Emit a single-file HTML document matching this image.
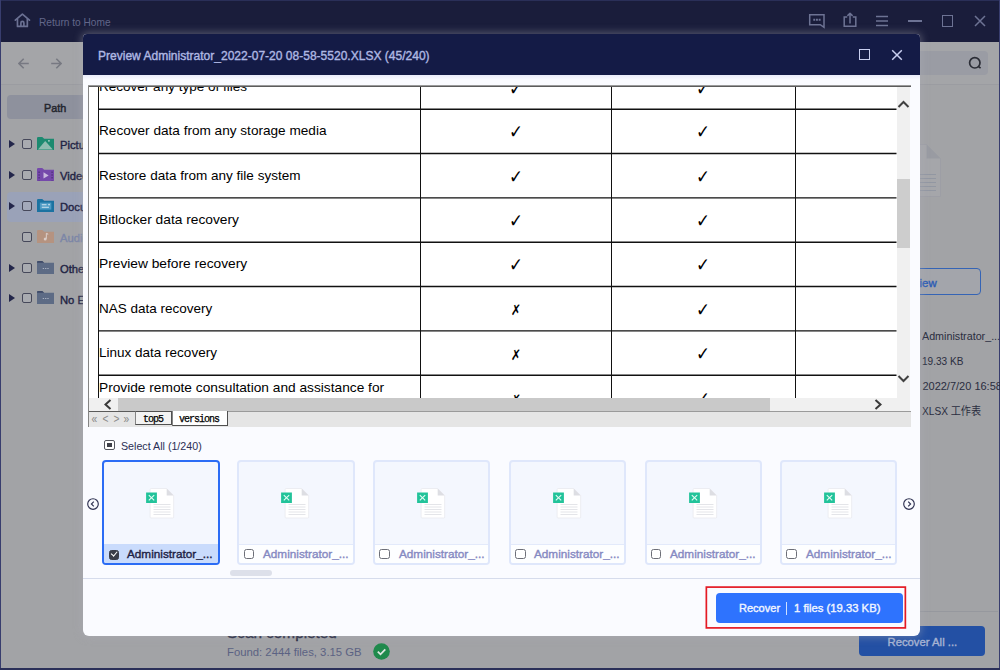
<!DOCTYPE html>
<html lang="en">
<head>
<meta charset="utf-8">
<title>Preview</title>
<style>
*{box-sizing:border-box;margin:0;padding:0}
html,body{width:1000px;height:670px;overflow:hidden;background:#1b1f3f}
body{font-family:"Liberation Sans","Noto Sans CJK SC",sans-serif;position:relative;color:#1f2340}
.abs{position:absolute}
.t{position:absolute;white-space:nowrap;line-height:1;transform-origin:0 50%}
/* ---------- main (dimmed) window ---------- */
#win{position:absolute;left:0;top:0;width:1000px;height:670px;background:#a2a3a6;overflow:hidden}
#frameL{left:0;top:0;width:1.4px;height:670px;background:#383d6e}
#frameR{left:998.6px;top:0;width:1.4px;height:670px;background:#383d6e}
#frameB{left:0;top:668px;width:1000px;height:2px;background:#2b3059}
#tbar{left:0;top:0;width:1000px;height:42px;background:#1a1d3b;border-top:1px solid #2a2f58}
#toolbar{left:1px;top:42px;width:998px;height:42.5px;background:#a4a5a8;border-bottom:1px solid #9b9ca1}
#pathbtn{left:7px;top:95.4px;width:100px;height:23.2px;border-radius:4px;background:#8e919d}
#selrow{left:7px;top:192px;width:100px;height:30px;border-radius:4px;background:#9aa2b8}
.tri{position:absolute;width:0;height:0;border-left:6px solid #23264a;border-top:4px solid transparent;border-bottom:4px solid transparent}
.cb{position:absolute;width:10px;height:10px;border:1px solid #46485a;border-radius:2px;background:#a9abb0}
.tl{font-size:11px;font-weight:bold;color:#1f2344;left:60.4px;transform:scaleX(1.02)}
#search{left:905px;top:51px;width:83px;height:24px;border-radius:4px;background:#9a9ca4}
#footline{left:200px;top:611.4px;width:798px;height:1px;background:#96989e}
#recall{left:859.3px;top:626.3px;width:125.7px;height:30px;border-radius:4px;background:#2350a4}
#pvbtn{left:880px;top:268px;width:101px;height:27px;border-radius:4px;border:1px solid #3564b5;background:#a3a5ab}
.rp{font-size:11px;color:#2a2d40;left:922.4px;transform:scaleX(.918)}
/* ---------- dialog ---------- */
#dlg{position:absolute;left:83px;top:34px;width:837px;height:601.6px;background:#fafbff;border-radius:4px 4px 6px 6px;box-shadow:0 0 9px 1px rgba(172,174,184,.45);overflow:hidden}
#dtitle{left:0;top:0;width:837px;height:40.5px;background:#141b46}
#dgrad{left:0;top:40.5px;width:837px;height:5px;background:linear-gradient(#e9ecfa,#fafbff)}

#sheet{left:5px;top:51px;width:823px;height:342px;overflow:hidden}
.hl{position:absolute;left:10px;width:798.5px;height:1.3px;background:#1c1c1c}
.vl{position:absolute;top:2px;width:1px;height:311px;background:#111}
.rt{left:11px;font-size:13px;color:#000}
.ck{font-family:"DejaVu Sans",sans-serif;font-size:18.5px;color:#000;width:20px;text-align:center;margin-left:-4px;transform-origin:50% 50%;transform:scaleX(.9)}
.ck.x{font-size:14.5px;transform:scaleX(.86)}
.nav{font-size:12px;color:#8b8b8b}
.nav span{display:inline-block;width:10.9px;text-align:center;transform:scaleX(.85)}
.tab{border:1px solid #505050;border-left-color:#858585;font-family:"Liberation Mono",monospace;font-size:10px;letter-spacing:-1px;color:#000;text-align:center;line-height:13.5px;-webkit-text-stroke:.25px #000}
.tab span{position:relative;left:-.5px}
.th{position:absolute;top:426px;width:117.3px;height:105px;border:2px solid #dfe7fb;border-radius:4px;background:#f4f7fe;overflow:hidden}
.th.sel{border-color:#2b6cf5;width:118px}
.lab{position:absolute;left:0;top:82px;width:114px;height:19px;background:#fdfeff;border-top:1px solid #e3eafb}
.sel .lab{background:#c9dbfc;border-top-color:#c9dbfc}
.c{position:absolute;left:4.3px;top:3.5px;width:10.5px;height:10.5px;border:1.5px solid #6d6f78;border-radius:2.5px;background:#fff}
.nm{left:23.7px;top:4.3px;font-size:11.8px;font-weight:bold;color:#8689c2;transform:scaleX(.996)}
.sel .nm{color:#1d2145}
.sel .c{background:#3b3e4a;border-color:#3b3e4a;left:5.5px;top:4.5px;width:10px;height:10px}
.sel .c::after{content:"";position:absolute;left:2px;top:-.5px;width:3px;height:5.4px;border:solid #fff;border-width:0 1.5px 1.5px 0;transform:rotate(40deg)}
.sb{font-weight:normal!important;-webkit-text-stroke:.38px currentColor}
/*FIT*/
#rth{font-size:11px!important;left:39.20px!important;transform:scaleX(0.9220)}
#dt{font-size:12.3px!important;left:14.90px!important;transform:scaleX(0.9780)}
#r0{font-size:13.3px!important;left:11.40px!important;transform:scaleX(1.0171)}
#r1{font-size:13.3px!important;left:11.40px!important;transform:scaleX(1.0226)}
#r2{font-size:13.3px!important;left:11.40px!important;transform:scaleX(1.0174)}
#r3{font-size:13.3px!important;left:11.40px!important;transform:scaleX(1.0351)}
#r4{font-size:13.3px!important;left:11.40px!important;transform:scaleX(1.0337)}
#r5{font-size:13.3px!important;left:11.40px!important;transform:scaleX(1.0143)}
#r6{font-size:13.3px!important;left:11.40px!important;transform:scaleX(1.0160)}
#r7{font-size:13.3px!important;left:11.40px!important;transform:scaleX(1.0313)}
#sa{font-size:11px!important;left:38.30px!important;transform:scaleX(0.9705)}
#pth{font-size:11.8px!important;left:43.75px!important;transform:scaleX(0.9163)}
#scn{font-size:14.5px!important;left:226.50px!important;transform:scaleX(1.0569)}
#fnd{font-size:11.2px!important;left:226.70px!important;transform:scaleX(1.0113)}
#rall{font-size:11.3px!important;left:887.50px!important;transform:scaleX(1.0000)}
#rp2{font-size:11px!important;left:922.40px!important;transform:scaleX(0.9146)}
#rp4{font-size:11px!important;left:922.40px!important;transform:scaleX(0.9207)}
#rc1{font-size:11.8px!important;left:655.50px!important;transform:scaleX(0.9354)}
#rc2{font-size:11.8px!important;left:711.00px!important;transform:scaleX(0.9547)}
/*ENDFIT*/</style>
</head>
<body>
<div id="win">
  <div class="abs" id="tbar"></div>
  <div class="abs" id="toolbar"></div>
  <div class="abs" id="frameL"></div><div class="abs" id="frameR"></div><div class="abs" id="frameB"></div>

  <!-- title bar -->
  <svg class="abs" style="left:14.3px;top:13px" width="16.8" height="15" viewBox="0 0 18 17" fill="none" stroke="#6b7193" stroke-width="1.9" stroke-linejoin="round" stroke-linecap="round"><path d="M1 8.2 L9 1.2 L17 8.2"/><path d="M3.4 7 V15.2 H14.6 V7"/><path d="M7.3 15 V11.2 a1.7 1.7 0 0 1 3.4 0 V15"/></svg>
  <div class="t" style="left:39px;top:16.5px;font-size:12px;color:#62678a" id="rth">Return to Home</div>

  <svg class="abs" style="left:808px;top:13px" width="18" height="16" viewBox="0 0 18 16" fill="none" stroke="#6d7394" stroke-width="1.5"><path d="M1.7 1.7 H16 V14.3 L12.3 11.7 H1.7 Z" stroke-linejoin="miter"/><path d="M5.3 6.7h1.9M8 6.7h1.9M10.7 6.7h1.9" stroke-width="1.9"/></svg>
  <svg class="abs" style="left:842.5px;top:12px" width="14" height="16" viewBox="0 0 14 16" fill="none" stroke="#6d7394" stroke-width="1.5"><path d="M4.2 5H1.2V14.2H12.8V5H9.8"/><path d="M7 11.5V1.5M4.4 3.9L7 1.3l2.6 2.6" stroke-linejoin="round"/></svg>
  <svg class="abs" style="left:876px;top:15px" width="12" height="12" viewBox="0 0 13 12" preserveAspectRatio="none" stroke="#6d7394" stroke-width="1.6"><path d="M0 1.5h13M0 6h13M0 10.5h13"/></svg>
  <div class="abs" style="left:908px;top:20px;width:14px;height:2px;background:#6d7394"></div>
  <div class="abs" style="left:941.7px;top:15.2px;width:11.5px;height:11.5px;border:1.5px solid #6d7394"></div>
  <svg class="abs" style="left:974px;top:15px" width="12" height="12" viewBox="0 0 12 12" stroke="#6d7394" stroke-width="1.5"><path d="M1 1L11 11M11 1L1 11"/></svg>

  <!-- toolbar -->
  <svg class="abs" style="left:18px;top:58px" width="11" height="11" viewBox="0 0 11 11" fill="none" stroke="#777982" stroke-width="1.6"><path d="M10.800 5.500H1.200M5.700.700L.900 5.500l4.800 4.800"/></svg>
  <svg class="abs" style="left:50.5px;top:58px" width="11" height="11" viewBox="0 0 11 11" fill="none" stroke="#777982" stroke-width="1.6"><path d="M.2 5.5h9.600M5.300.7l4.800 4.800-4.800 4.800"/></svg>
  <div class="abs" id="search"></div>
  <svg class="abs" style="left:967px;top:55px" width="16" height="16" viewBox="0 0 16 16" fill="none" stroke="#2b2d36" stroke-width="1.7"><circle cx="7.8" cy="7.8" r="5.2"/><path d="M11.6 11.6l2 1.6"/></svg>

  <!-- sidebar -->
  <div class="abs" id="pathbtn"></div>
  <div class="t sb" id="pth" style="left:44px;top:102.5px;font-size:12px;font-weight:bold;color:#25262f;-webkit-text-stroke-width:.5px">Path</div>
  <div class="abs" id="selrow"></div>

  <div class="tri" style="left:9px;top:140px"></div><div class="cb" style="left:22px;top:139px"></div>
  <div class="tri" style="left:9px;top:171px"></div><div class="cb" style="left:22px;top:170px"></div>
  <div class="tri" style="left:9px;top:202px"></div><div class="cb" style="left:22px;top:201px;background:#a3a9ba"></div>
  <div class="cb" style="left:22px;top:232px"></div>
  <div class="tri" style="left:9px;top:264px"></div><div class="cb" style="left:22px;top:263px"></div>
  <div class="tri" style="left:9px;top:294px"></div><div class="cb" style="left:22px;top:293px"></div>

  <!-- folder icons -->
  <svg class="abs" style="left:37.3px;top:137px" width="17.2" height="13" viewBox="0 0 18 13" preserveAspectRatio="none"><path d="M0 1.2 Q0 0 1.2 0 H5.5 L7.5 1.8 H18 V13 H0Z" fill="#1c8a70"/><path d="M1 12.4 L8.6 4 L16.6 12.4Z" fill="#8fbcb0"/><circle cx="12.5" cy="3.8" r=".9" fill="#b9d6ce"/></svg>
  <svg class="abs" style="left:37.3px;top:168px" width="17.2" height="13" viewBox="0 0 18 13" preserveAspectRatio="none"><path d="M0 1.2 Q0 0 1.2 0 H5.5 L7.5 1.8 H18 V13 H0Z" fill="#7549ab"/><path d="M6.8 4.2 L12.2 7.4 L6.8 10.6Z" fill="#c9b8de"/><path d="M2.2 3.5v9M15.8 3.5v9" stroke="#50307d" stroke-width="1.4" stroke-dasharray="1.4 1.4"/></svg>
  <svg class="abs" style="left:37.3px;top:199px" width="17.2" height="13" viewBox="0 0 18 13" preserveAspectRatio="none"><path d="M0 1.2 Q0 0 1.2 0 H5.5 L7.5 1.8 H18 V13 H0Z" fill="#1b72a1"/><rect x="3" y="3.6" width="12" height="7" fill="#4d9ac4"/><path d="M5 5.8h5M5 8.2h7.5" stroke="#d5e6f0" stroke-width="1.1"/><circle cx="12.6" cy="5.6" r=".9" fill="#d5e6f0"/></svg>
  <svg class="abs" style="left:37.3px;top:230px" width="17.2" height="13" viewBox="0 0 18 13" preserveAspectRatio="none"><path d="M0 1.2 Q0 0 1.2 0 H5.5 L7.5 1.8 H18 V13 H0Z" fill="#b59380"/><path d="M9.8 3.2v5.6" stroke="#d9cdc8" stroke-width="1.1"/><circle cx="8.6" cy="9" r="1.5" fill="#d9cdc8"/><path d="M9.8 3.2l2 1.2" stroke="#d9cdc8" stroke-width="1.1"/></svg>
  <svg class="abs" style="left:37.3px;top:261px" width="17.2" height="13" viewBox="0 0 18 13" preserveAspectRatio="none"><path d="M0 1.2 Q0 0 1.2 0 H5.5 L7.5 1.8 H18 V13 H0Z" fill="#5d6b85"/><path d="M0 1.2 Q0 0 1.2 0 H5.5 L7.5 1.8 H0Z" fill="#3e4a68"/><path d="M6 7.5h1.4M8.4 7.5h1.4M10.8 7.5h1.4" stroke="#a9b1c1" stroke-width="1.2"/></svg>
  <svg class="abs" style="left:37.3px;top:291px" width="17.2" height="13" viewBox="0 0 18 13" preserveAspectRatio="none"><path d="M0 1.2 Q0 0 1.2 0 H5.5 L7.5 1.8 H18 V13 H0Z" fill="#5d6b85"/><path d="M0 1.2 Q0 0 1.2 0 H5.5 L7.5 1.8 H0Z" fill="#3e4a68"/><path d="M6 7.5h1.4M8.4 7.5h1.4M10.8 7.5h1.4" stroke="#a9b1c1" stroke-width="1.2"/></svg>

  <div class="t tl sb" style="top:140px">Pictures</div>
  <div class="t tl sb" style="top:171px">Videos</div>
  <div class="t tl sb" style="top:202px">Documents</div>
  <div class="t tl sb" style="top:233px;color:#7c86a6">Audio</div>
  <div class="t tl sb" style="top:263.7px">Others</div>
  <div class="t tl sb" style="top:294.5px">No Extension</div>

  <!-- right panel -->
  <svg class="abs" style="left:905px;top:144px" width="37" height="56" viewBox="0 0 37 56"><path d="M0 .5H21.500L35.500 14.500V52.500H0Z" fill="#a5a6aa" stroke="#9d9ea5" stroke-width="1"/><path d="M21.500 .5L35.500 14.500H21.500Z" fill="#999ba2"/><path d="M4 30.500h27M4 34.500h27M4 38.500h27M4 42.500h27M4 46.500h27" stroke="#9297a2" stroke-width="1"/></svg>
  <div class="abs" id="pvbtn"></div>
  <div class="t sb" style="left:896px;top:277.5px;font-size:11.8px;font-weight:bold;color:#2c5cb5;transform:scaleX(.97)">Preview</div>
  <div class="t rp" id="rp1" style="top:330.5px;transform:scaleX(.975)">Administrator_...</div>
  <div class="t rp" id="rp2" style="top:355.5px">19.33 KB</div>
  <div class="t rp" id="rp3" style="top:380.5px;transform:scaleX(1)">2022/7/20 16:58</div>
  <div class="t rp" id="rp4" style="top:405.5px">XLSX 工作表</div>

  <!-- footer -->
  <div class="abs" id="footline"></div>
  <div class="t sb" id="scn" style="left:227px;top:625.7px;font-size:15px;font-weight:bold;color:#1c1f3a">Scan completed</div>
  <div class="t" id="fnd" style="left:227px;top:646.5px;font-size:12.5px;color:#5b6283">Found: 2444 files, 3.15 GB</div>
  <svg class="abs" style="left:373px;top:643.4px" width="17" height="17" viewBox="0 0 17 17"><circle cx="8.5" cy="8.5" r="8.3" fill="#1f8a4c"/><path d="M4.8 8.6l2.7 2.7 4.8-5" fill="none" stroke="#dfe7e2" stroke-width="1.8"/></svg>
  <div class="abs" id="recall"></div>
  <div class="t sb" id="rall" style="left:887px;top:636.5px;font-size:12.5px;color:#a6b3d3">Recover All ...</div>
</div>

<!-- ================= dialog ================= -->
<div id="dlg">
  <div class="abs" id="dtitle"></div>
  <div class="abs" id="dgrad"></div>
  <div class="t sb" id="dt" style="left:15px;top:15.5px;font-size:12px;font-weight:bold;color:#afb8e3">Preview Administrator_2022-07-20 08-58-5520.XLSX (45/240)</div>
  <div class="abs" style="left:776px;top:15px;width:11px;height:11px;border:1.5px solid #c9cff0"></div>
  <svg class="abs" style="left:808px;top:15px" width="12" height="12" viewBox="0 0 12 12" stroke="#c9cff0" stroke-width="1.5"><path d="M1.2 1.2L10.8 10.8M10.8 1.2L1.2 10.8"/></svg>
  <div class="abs" id="sheet">
   <div class="abs" style="left:1px;top:2px;width:808px;height:311px;background:#fff"></div>
   <svg class="abs" style="left:0;top:0" width="809" height="313" viewBox="0 0 809 313"><path d="M10 24.20H808.5M10 68.53H808.5M10 112.87H808.5M10 157.20H808.5M10 201.53H808.5M10 245.87H808.5M10 290.20H808.5" stroke="#111" stroke-width="1.45" fill="none"/></svg>
   <div class="vl" style="left:10px"></div>
   <div class="vl" style="left:332px"></div>
   <div class="vl" style="left:523px"></div>
   <div class="vl" style="left:707px"></div>
   <div class="t rt" id="r0" style="top:-4.8px">Recover any type of files</div>
   <div class="t ck" style="left:422px;top:-4.7px">✓</div>
   <div class="t ck" style="left:609px;top:-4.7px">✓</div>
   <div class="t rt" id="r1" style="top:39.4px">Recover data from any storage media</div>
   <div class="t ck" style="left:422px;top:38.2px">✓</div>
   <div class="t ck" style="left:609px;top:38.2px">✓</div>
   <div class="t rt" id="r2" style="top:83.8px">Restore data from any file system</div>
   <div class="t ck" style="left:422px;top:82.5px">✓</div>
   <div class="t ck" style="left:609px;top:82.5px">✓</div>
   <div class="t rt" id="r3" style="top:128.1px">Bitlocker data recovery</div>
   <div class="t ck" style="left:422px;top:126.9px">✓</div>
   <div class="t ck" style="left:609px;top:126.9px">✓</div>
   <div class="t rt" id="r4" style="top:172.4px">Preview before recovery</div>
   <div class="t ck" style="left:422px;top:171.2px">✓</div>
   <div class="t ck" style="left:609px;top:171.2px">✓</div>
   <div class="t rt" id="r5" style="top:216.7px">NAS data recovery</div>
   <div class="t ck x" style="left:422px;top:218.4px">✗</div>
   <div class="t ck" style="left:609px;top:215.5px">✓</div>
   <div class="t rt" id="r6" style="top:261.1px">Linux data recovery</div>
   <div class="t ck x" style="left:422px;top:262.8px">✗</div>
   <div class="t ck" style="left:609px;top:259.9px">✓</div>
   <div class="t rt" id="r7" style="top:295.7px">Provide remote consultation and assistance for</div>
   <div class="t ck x" style="left:422px;top:308.0px">✗</div>
   <div class="t ck" style="left:609px;top:305.1px">✓</div>
   <div class="abs" style="left:808.5px;top:2px;width:13.5px;height:311px;background:#f0f0f0"></div>
   <div class="abs" style="left:809px;top:94px;width:13px;height:69px;background:#cdcdcd"></div>
   <svg class="abs" style="left:809px;top:14px" width="13" height="10" viewBox="0 0 13 10" fill="none" stroke="#404040" stroke-width="2"><path d="M1.5 8L6.5 3l5 5"/></svg>
   <svg class="abs" style="left:809px;top:289px" width="13" height="10" viewBox="0 0 13 10" fill="none" stroke="#404040" stroke-width="2"><path d="M1.5 2l5 5 5-5"/></svg>
   <div class="abs" style="left:1px;top:313px;width:821px;height:12.5px;background:#f0f0f0"></div>
   <div class="abs" style="left:30px;top:313px;width:652px;height:12.5px;background:#c9c9c9"></div>
   <svg class="abs" style="left:15px;top:314px" width="9" height="11" viewBox="0 0 9 11" fill="none" stroke="#3a3a3a" stroke-width="2"><path d="M7.5 1L2.5 5.5l5 4.5"/></svg>
   <svg class="abs" style="left:786px;top:314px" width="9" height="11" viewBox="0 0 9 11" fill="none" stroke="#3a3a3a" stroke-width="2"><path d="M1.5 1l5 4.5-5 4.5"/></svg>
   <div class="abs" style="left:1px;top:325.5px;width:822px;height:16.5px;background:#e5e5e5"></div>
   <div class="abs" style="left:1px;top:325.5px;width:47px;height:1px;background:#5a5a5a"></div>
   <div class="abs" style="left:139px;top:325.5px;width:684px;height:1.5px;background:#9a9a9a"></div>
   <div class="t nav" style="left:0.8px;top:327.5px"><span>«</span><span>&lt;</span><span>&gt;</span><span>»</span></div>
   <div class="abs tab" id="tab1" style="left:47px;top:326px;width:37px;height:13.5px;background:#f3f3f3;line-height:15px"><span>top5</span></div>
   <div class="abs tab" id="tab2" style="left:83.5px;top:325.5px;width:56px;height:15.5px;background:#fff;border-top:0;line-height:17.500px"><span>versions</span></div>
   <div class="abs" style="left:0;top:0;width:1px;height:342px;background:#858585"></div>
   <div class="abs" style="left:0;top:0;width:823px;height:1px;background:#9a9a9a"></div>
   <div class="abs" style="left:1px;top:1px;width:822px;height:1px;background:#5c5c5c"></div>
  </div>
  <div class="abs" style="left:21.3px;top:406px;width:10.6px;height:9.5px;border:1.2px solid #55575f;border-radius:2px;background:#fff"><div class="abs" style="left:1.8px;top:1.5px;width:5px;height:4.5px;background:#3e4049"></div></div>
  <div class="t" id="sa" style="left:38.5px;top:406.5px;font-size:12px;color:#2b2f55">Select All (1/240)</div>
  <div class="th sel" style="left:18.7px">
   <svg class="abs" style="left:40px;top:25px" width="32" height="34" viewBox="0 0 32 34"><path d="M6.1 2.5 Q6.1 1.5 7.1 1.5 H22.7 L29.7 8.5 V30 Q29.7 31 28.7 31 H7.1 Q6.1 31 6.1 30Z" fill="#fff" stroke="#ecedf2" stroke-width="1"/><path d="M22.7 1.5 L29.7 8.5 H22.7Z" fill="#dddee3"/><path d="M9.5 17.5h17M9.5 20h17M9.5 22.5h17M9.5 25h17M9.5 27.5h17" stroke="#e4e5e9" stroke-width="1"/><rect x="2.1" y="5.5" width="10.8" height="10.5" fill="#22c39a"/><path d="M4.8 8.1l5.400 5.3M10.2 8.1l-5.400 5.3" stroke="#e6fbf4" stroke-width="1.1"/></svg>
   <div class="lab"><div class="c"></div><div class="t nm sb">Administrator_...</div></div>
  </div>
  <div class="th" style="left:154.4px">
   <svg class="abs" style="left:40px;top:25px" width="32" height="34" viewBox="0 0 32 34"><path d="M6.1 2.5 Q6.1 1.5 7.1 1.5 H22.7 L29.7 8.5 V30 Q29.7 31 28.7 31 H7.1 Q6.1 31 6.1 30Z" fill="#fff" stroke="#ecedf2" stroke-width="1"/><path d="M22.7 1.5 L29.7 8.5 H22.7Z" fill="#dddee3"/><path d="M9.5 17.5h17M9.5 20h17M9.5 22.5h17M9.5 25h17M9.5 27.5h17" stroke="#e4e5e9" stroke-width="1"/><rect x="2.1" y="5.5" width="10.8" height="10.5" fill="#22c39a"/><path d="M4.8 8.1l5.400 5.3M10.2 8.1l-5.400 5.3" stroke="#e6fbf4" stroke-width="1.1"/></svg>
   <div class="lab"><div class="c"></div><div class="t nm sb">Administrator_...</div></div>
  </div>
  <div class="th" style="left:290.1px">
   <svg class="abs" style="left:40px;top:25px" width="32" height="34" viewBox="0 0 32 34"><path d="M6.1 2.5 Q6.1 1.5 7.1 1.5 H22.7 L29.7 8.5 V30 Q29.7 31 28.7 31 H7.1 Q6.1 31 6.1 30Z" fill="#fff" stroke="#ecedf2" stroke-width="1"/><path d="M22.7 1.5 L29.7 8.5 H22.7Z" fill="#dddee3"/><path d="M9.5 17.5h17M9.5 20h17M9.5 22.5h17M9.5 25h17M9.5 27.5h17" stroke="#e4e5e9" stroke-width="1"/><rect x="2.1" y="5.5" width="10.8" height="10.5" fill="#22c39a"/><path d="M4.8 8.1l5.400 5.3M10.2 8.1l-5.400 5.3" stroke="#e6fbf4" stroke-width="1.1"/></svg>
   <div class="lab"><div class="c"></div><div class="t nm sb">Administrator_...</div></div>
  </div>
  <div class="th" style="left:425.8px">
   <svg class="abs" style="left:40px;top:25px" width="32" height="34" viewBox="0 0 32 34"><path d="M6.1 2.5 Q6.1 1.5 7.1 1.5 H22.7 L29.7 8.5 V30 Q29.7 31 28.7 31 H7.1 Q6.1 31 6.1 30Z" fill="#fff" stroke="#ecedf2" stroke-width="1"/><path d="M22.7 1.5 L29.7 8.5 H22.7Z" fill="#dddee3"/><path d="M9.5 17.5h17M9.5 20h17M9.5 22.5h17M9.5 25h17M9.5 27.5h17" stroke="#e4e5e9" stroke-width="1"/><rect x="2.1" y="5.5" width="10.8" height="10.5" fill="#22c39a"/><path d="M4.8 8.1l5.400 5.3M10.2 8.1l-5.400 5.3" stroke="#e6fbf4" stroke-width="1.1"/></svg>
   <div class="lab"><div class="c"></div><div class="t nm sb">Administrator_...</div></div>
  </div>
  <div class="th" style="left:561.5px">
   <svg class="abs" style="left:40px;top:25px" width="32" height="34" viewBox="0 0 32 34"><path d="M6.1 2.5 Q6.1 1.5 7.1 1.5 H22.7 L29.7 8.5 V30 Q29.7 31 28.7 31 H7.1 Q6.1 31 6.1 30Z" fill="#fff" stroke="#ecedf2" stroke-width="1"/><path d="M22.7 1.5 L29.7 8.5 H22.7Z" fill="#dddee3"/><path d="M9.5 17.5h17M9.5 20h17M9.5 22.5h17M9.5 25h17M9.5 27.5h17" stroke="#e4e5e9" stroke-width="1"/><rect x="2.1" y="5.5" width="10.8" height="10.5" fill="#22c39a"/><path d="M4.8 8.1l5.400 5.3M10.2 8.1l-5.400 5.3" stroke="#e6fbf4" stroke-width="1.1"/></svg>
   <div class="lab"><div class="c"></div><div class="t nm sb">Administrator_...</div></div>
  </div>
  <div class="th" style="left:697.2px">
   <svg class="abs" style="left:40px;top:25px" width="32" height="34" viewBox="0 0 32 34"><path d="M6.1 2.5 Q6.1 1.5 7.1 1.5 H22.7 L29.7 8.5 V30 Q29.7 31 28.7 31 H7.1 Q6.1 31 6.1 30Z" fill="#fff" stroke="#ecedf2" stroke-width="1"/><path d="M22.7 1.5 L29.7 8.5 H22.7Z" fill="#dddee3"/><path d="M9.5 17.5h17M9.5 20h17M9.5 22.5h17M9.5 25h17M9.5 27.5h17" stroke="#e4e5e9" stroke-width="1"/><rect x="2.1" y="5.5" width="10.8" height="10.5" fill="#22c39a"/><path d="M4.8 8.1l5.400 5.3M10.2 8.1l-5.400 5.3" stroke="#e6fbf4" stroke-width="1.1"/></svg>
   <div class="lab"><div class="c"></div><div class="t nm sb">Administrator_...</div></div>
  </div>
  <svg class="abs" style="left:3.6px;top:464.4px" width="12" height="12" viewBox="0 0 12 12" fill="none" stroke="#2f3252" stroke-width="1.15"><circle cx="6" cy="6" r="5.3"/><path d="M6.800 3.600L4.400 6l2.400 2.400"/></svg>
  <svg class="abs" style="left:819.5px;top:464.4px" width="12" height="12" viewBox="0 0 12 12" fill="none" stroke="#2f3252" stroke-width="1.15"><circle cx="6" cy="6" r="5.3"/><path d="M5.200 3.600L7.600 6 5.200 8.400"/></svg>
  <div class="abs" style="left:147px;top:536px;width:42px;height:6px;border-radius:3px;background:#dde0ea"></div>
  <div class="abs" style="left:0;top:544px;width:837px;height:1px;background:#d6dcec"></div>
  <svg class="abs" style="left:621px;top:551px" width="204" height="46" viewBox="0 0 204 46"><rect x="2.35" y="2.1" width="199" height="40.8" fill="none" stroke="#e41a24" stroke-width="1.7"/></svg>
  <div class="abs" style="left:633px;top:559px;width:187px;height:30px;border-radius:4px;background:#2e73fe"></div>
  <div class="t sb" id="rc1" style="left:655px;top:569.3px;font-size:12px;font-weight:bold;color:#f2f6ff">Recover</div>
  <div class="abs" style="left:703.3px;top:567.5px;width:1.2px;height:13.5px;background:#cfe0ff"></div>
  <div class="t sb" id="rc2" style="left:710px;top:569.3px;font-size:12px;font-weight:bold;color:#f2f6ff">1 files (19.33 KB)</div>
</div>
</body>
</html>
